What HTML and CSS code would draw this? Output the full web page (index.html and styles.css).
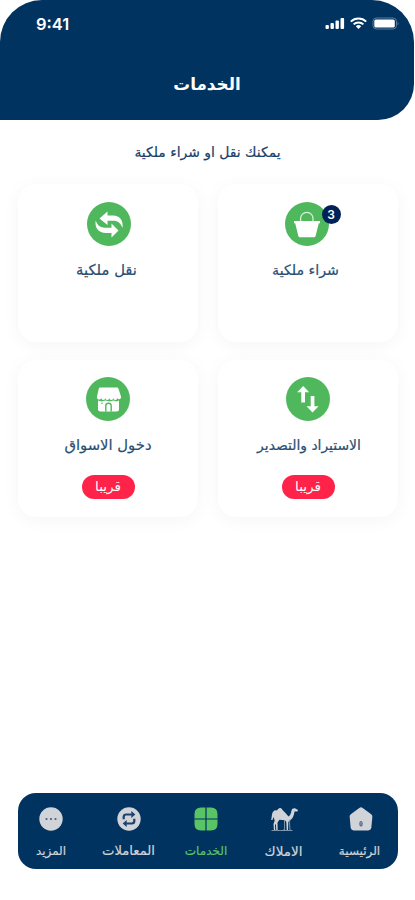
FILE: index.html
```html
<!DOCTYPE html>
<html lang="ar" dir="rtl">
<head>
    <meta charset="UTF-8">
    <meta name="viewport" content="width=device-width, initial-scale=1.0">
    <title>الخدمات</title>
    <link rel="stylesheet" href="styles.css">
</head>
<body>
    <div class="screen">
        <header class="header">
            <div class="status-bar" dir="ltr">
                <span class="time">9:41</span>
                <svg class="status-icons" width="74" height="14" viewBox="0 0 74 14">
                    <g fill="#fff">
                        <rect x="0.5" y="8" width="3.4" height="4" rx="1"/>
                        <rect x="5.5" y="6" width="3.4" height="6" rx="1"/>
                        <rect x="10.5" y="3.5" width="3.4" height="8.5" rx="1"/>
                        <rect x="15.5" y="1" width="3.6" height="11" rx="1"/>
                        <path d="M33.5 12l-2.7-2.8a4 4 0 0 1 5.4 0z"/>
                    </g>
                    <path d="M28.6 7.4a7 7 0 0 1 9.8 0M25.8 4.6a11 11 0 0 1 15.4 0" fill="none" stroke="#fff" stroke-width="2"/>
                    <rect x="48" y="1" width="23.5" height="11" rx="3.4" fill="none" stroke="#5d7c9b"/>
                    <rect x="49.3" y="2.5" width="20.5" height="8" rx="1.6" fill="#fff"/>
                    <path d="M72.6 4.5q1.8 2 0 4z" fill="#5d7c9b"/>
                </svg>
            </div>
            <h1>الخدمات</h1>
        </header>

        <main>
            <p class="intro">يمكنك نقل او شراء ملكية</p>

            <div class="cards">
                <div class="card buy">
                    <div class="card-icon">
                        <svg width="44" height="44" viewBox="0 0 44 44">
                            <circle cx="22" cy="22" r="22" fill="#50b85c"/>
                            <path d="M9 19h26v2.2h-1.2L30.6 34a1.8 1.8 0 0 1-1.7 1.2H15a1.8 1.8 0 0 1-1.7-1.2L10.2 21.2H9z" fill="#fff"/>
                            <path d="M15.6 19v-2.5a6.2 6.2 0 0 1 12.4 0V19" fill="none" stroke="#d5f0d6" stroke-width="1.3"/>
                        </svg>
                        <span class="badge">3</span>
                    </div>
                    <h2>شراء ملكية</h2>
                </div>

                <div class="card transfer">
                    <div class="card-icon">
                        <svg width="44" height="44" viewBox="0 0 44 44">
                            <circle cx="22" cy="22" r="22" fill="#50b85c"/>
                            <path d="M12.5 16.5L20.5 9.5V13.5H26C33 13.500 36.500 18.500 35.500 26C33.500 21 31 18.800 26.500 18.800H20.500V23z" fill="#fff"/>
                            <path d="M31.500 28.500L24.500 35.500V31H19C11.500 31 7.500 26 8.700 18.500C10.500 23.500 13.500 25.700 18 25.700H24.500V21.500z" fill="#fff"/>
                        </svg>
                    </div>
                    <h2>نقل ملكية</h2>
                </div>

                <div class="card trade">
                    <div class="card-icon">
                        <svg width="44" height="44" viewBox="0 0 44 44">
                            <circle cx="22" cy="22" r="22" fill="#50b85c"/>
                            <path d="M17.2 9l6 6.200h-4.200v10.300h-3.700V15.200h-4.200zM26.500 35.500l-6-6.200h4.200V19h3.700v10.300h4.200z" fill="#fff"/>
                        </svg>
                    </div>
                    <h2>الاستيراد والتصدير</h2>
                    <div class="soon">قريبا</div>
                </div>

                <div class="card market">
                    <div class="card-icon">
                        <svg width="44" height="44" viewBox="0 0 44 44">
                            <circle cx="22" cy="22" r="22" fill="#50b85c"/>
                            <path d="M14 10.500h17a1.500 1.500 0 0 1 1.400 1l2.600 8a1.900 1.900 0 0 1-3.700 1.500 2 2 0 0 1-4 0 2 2 0 0 1-4 0 2 2 0 0 1-4 0 2 2 0 0 1-4 0A2.200 2.200 0 0 1 11 19.500l1.800-8a1.500 1.500 0 0 1 1.200-1z" fill="#fff"/>
                            <path d="M12 23.500l3.500 1 4-1 4 1 4-1 3 1 2.500-1V32a2.500 2.500 0 0 1-2.500 2.500H14.500A2.500 2.500 0 0 1 12 32z" fill="#fff"/>
                            <path d="M19.800 34.500V29a2.700 2.700 0 0 1 5.400 0v5.500" fill="none" stroke="#50b85c" stroke-width="1.400"/>
                            <circle cx="16" cy="26.300" r=".8" fill="#50b85c"/>
                        </svg>
                    </div>
                    <h2>دخول الاسواق</h2>
                    <div class="soon">قريبا</div>
                </div>
            </div>
        </main>

        <nav class="tab-bar">
            <a class="tab home" href="#">
                <svg width="26" height="26" viewBox="0 0 26 26">
                    <path d="M11.300 1.900a3 3 0 0 1 3.400 0l8.500 6.300a3 3 0 0 1 1.100 3.300l-1 10.400a3.200 3.200 0 0 1-3.100 2.500H5.800a3.200 3.200 0 0 1-3.100-2.500L1.700 11.500a3 3 0 0 1 1.100-3.300z" fill="#d0d3d8"/>
                    <ellipse cx="13" cy="17.700" rx="1.700" ry="2.800" fill="#42617f"/>
                    <path d="M13 16v3.300" stroke="#d0d3d8" stroke-width=".7"/>
                </svg>
                <span>الرئيسية</span>
            </a>
            <a class="tab owned" href="#">
                <svg width="28" height="26" viewBox="0 0 28 26">
                    <path d="M2 8.500C2.500 5.500 4.500 3.500 7 4.500C8.500 1.500 11 1 12.500 4L15.500 7L18.500 10.500C20.500 9.500 21 7 21.500 4.500C21.800 2.600 23.500 2 25 2.300L28 4L27.500 5.500L24.500 5.500C24 9 23 13 19.500 14.500L18.300 16L18 24H16.700L16.300 16L15 14.200L9.500 13.800L7.500 16.500L7.700 24H6.300L5.900 18L5 19L5.300 24H3.900L3.500 18L4.700 14.500L3.500 11L2.500 14L1.200 14Z" fill="#d0d3d8"/>
                    <path d="M14.500 14v10h-1.300M20 13.500l-.5 3 .5 7.500M1.500 24.500h21" fill="none" stroke="#9badbd" stroke-width=".8"/>
                </svg>
                <span>الاملاك</span>
            </a>
            <a class="tab active" href="#">
                <svg width="26" height="26" viewBox="0 0 26 26">
                    <path d="M12.400 1.500v10.900H1.500V8q0-6.500 6.500-6.500zM13.600 1.500H18q6.500 0 6.500 6.500v4.400H13.600zM1.500 13.600h10.900v10.900H8q-6.500 0-6.500-6.500zM13.600 13.600h10.900V18q0 6.500-6.500 6.500h-4.400z" fill="#58c465"/>
                </svg>
                <span>الخدمات</span>
            </a>
            <a class="tab orders" href="#">
                <svg width="26" height="26" viewBox="0 0 26 26">
                    <circle cx="13" cy="13" r="11.700" fill="#d0d3d8"/>
                    <path d="M7.700 13.300V11q0-2.500 2.500-2.500h5.500M18.300 12.700V15q0 2.500-2.500 2.500h-5.500" fill="none" stroke="#1c416b" stroke-width="2.200"/>
                    <path d="M15.300 5.100l4 3.400-4 3.400zM10.700 14.100l-4 3.400 4 3.400z" fill="#1c416b"/>
                </svg>
                <span>المعاملات</span>
            </a>
            <a class="tab" href="#">
                <svg width="26" height="26" viewBox="0 0 26 26">
                    <circle cx="13" cy="13" r="11.700" fill="#d0d3d8"/>
                    <g fill="#405f7e">
                        <circle cx="8.500" cy="13" r="1.100"/>
                        <circle cx="13" cy="13" r="1.100"/>
                        <circle cx="17.500" cy="13" r="1.100"/>
                    </g>
                </svg>
                <span>المزيد</span>
            </a>
        </nav>
    </div>
</body>
</html>
```

FILE: styles.css
```css
* {
    box-sizing: border-box;
    margin: 0;
    padding: 0;
}

body {
    font-family: 'DejaVu Sans', sans-serif;
    background-color: #ffffff;
    color: #294e72;
}

.screen {
    height: 900px;
    display: flex;
    flex-direction: column;
    overflow: hidden;
}

.header {
    width: 414px;
    height: 120px;
    margin-right: 1px;
    background-color: #00335f;
    border-radius: 42px 42px 36px 0;
    color: #ffffff;
    text-align: center;
}

.status-bar {
    display: flex;
    justify-content: space-between;
    align-items: center;
    height: 48px;
    padding: 0 15px 0 36px;
}

.time {
    font-family: Inter, sans-serif;
    font-size: 16.500px;
    font-weight: 600;
}

h1, h2, .intro {
    white-space: nowrap;
    text-align: center;
}

h1 {
    font-size: 16.8px;
    line-height: 24px;
    margin-top: 24px;
}

.intro {
    font-size: 13.9px;
    line-height: 20px;
    margin: 22px 0 22px;
    color: #17416b;
    -webkit-text-stroke: 0.2px;
}

.cards {
    display: grid;
    grid-template-columns: 180px 180px;
    grid-template-rows: 158px 157px;
    gap: 18px 20px;
    margin-right: 17px;
}

.card {
    display: flex;
    flex-direction: column;
    align-items: center;
    padding-top: 18px;
    border-radius: 18px;
    background-color: #ffffff;
    box-shadow: 0 3px 18px rgba(0, 0, 0, 0.045);
}

.card-icon {
    position: relative;
    width: 44px;
    height: 44px;
}

.card-icon svg {
    display: block;
}

.badge {
    position: absolute;
    top: 3px;
    right: -12px;
    width: 19px;
    height: 19px;
    border-radius: 50%;
    background-color: #002259;
    color: #ffffff;
    font: 600 12px/19px Inter, sans-serif;
    text-align: center;
}

h2 {
    font-size: 14.2px;
    font-weight: normal;
    line-height: 22px;
    margin-top: 13px;
    -webkit-text-stroke: 0.2px;
}

/* small optical shifts, the cards are not exactly centered */
.buy {
    padding-right: 3px;
}

.buy h2 {
    margin-right: 2px;
}

.transfer .card-icon {
    margin-left: 1px;
}

.transfer h2 {
    font-size: 14.8px;
    margin-right: 3px;
}

.trade, .market {
    padding-top: 17px;
}

.trade h2 {
    font-size: 13.9px;
    margin-left: 2px;
}

.market h2 {
    font-size: 14.800px;
}

.soon {
    width: 53px;
    height: 24px;
    margin-top: 19px;
    border-radius: 12px;
    background-color: #ff2349;
    color: #ffffff;
    font-size: 13.500px;
    line-height: 23px;
    text-align: center;
}

.tab-bar {
    display: flex;
    justify-content: center;
    width: 380px;
    height: 76px;
    margin: auto 17px 31px 0;
    padding: 13px 4px 0 0;
    border-radius: 18px;
    background-color: #00335f;
}

.tab {
    flex: 0 0 77.5px;
    display: flex;
    flex-direction: column;
    align-items: center;
    color: #d0d3d8;
    font-size: 12px;
    line-height: 18px;
    text-decoration: none;
    white-space: nowrap;
    -webkit-text-stroke: 0.2px;
}

.tab svg {
    margin-bottom: 10px;
}

.tab.home span {
    margin-right: 3px;
}

.tab.owned {
    font-size: 13.500px;
}

.tab.orders {
    font-size: 13.200px;
}

.tab.active {
    color: #58c465;
}
```
